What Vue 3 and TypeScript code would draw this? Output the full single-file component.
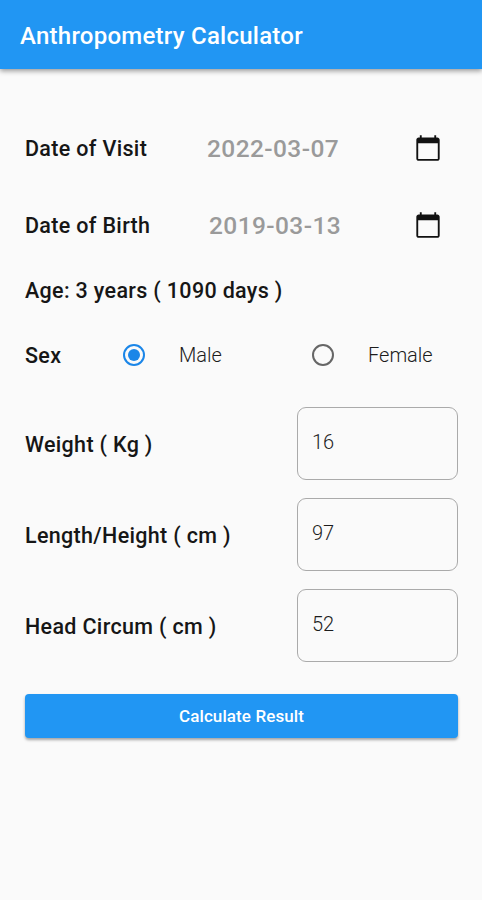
<script setup lang="ts">
import { ref } from 'vue'

const dates = ref([
  { label: 'Date of Visit', value: '2022-03-07', kind: 'visit' },
  { label: 'Date of Birth', value: '2019-03-13', kind: 'birth' },
])
const sex = ref('Male')
const fields = ref([
  { label: 'Weight ( Kg )', value: '16', kind: 'weight' },
  { label: 'Length/Height ( cm )', value: '97', kind: 'height' },
  { label: 'Head Circum ( cm )', value: '52', kind: 'head' },
])
</script>

<template>
  <div class="screen">
    <header class="bar"><h1>Anthropometry Calculator</h1></header>
    <main>
      <div v-for="d in dates" :key="d.kind" class="date-row" :class="d.kind">
        <span class="label">{{ d.label }}</span>
        <span class="date">{{ d.value }}</span>
        <button class="cal" :aria-label="d.label">
          <svg viewBox="0 0 24 24"><path d="M20 3h-1V1h-1.6v2H6.6V1H5v2H4c-1.1 0-2 .9-2 2v16c0 1.1.9 2 2 2h16c1.1 0 2-.9 2-2V5c0-1.1-.9-2-2-2zm.4 18.4H3.6V8h16.8v13.4z" /></svg>
        </button>
      </div>
      <div class="age label">Age: 3 years ( 1090 days )</div>
      <div class="sex-row">
        <span class="label">Sex</span>
        <button v-for="s in ['Male', 'Female']" :key="s" class="option" :class="{ on: sex === s }" @click="sex = s">
          <span class="radio"></span><span class="name">{{ s }}</span>
        </button>
      </div>
      <div class="fields">
        <label v-for="f in fields" :key="f.kind" class="field">
          <span class="label">{{ f.label }}</span>
          <input v-model="f.value" />
        </label>
      </div>
      <button class="submit">Calculate Result</button>
    </main>
  </div>
</template>

<style>
body { margin: 0; background: #fafafa; }
</style>
<style scoped>
.screen { width: 482px; height: 900px; background: #fafafa; font-family: Roboto, sans-serif; color: #161616; overflow: hidden; }
.bar { height: 69px; background: #2196f3; box-shadow: 0 2px 5px rgba(0, 0, 0, .4); display: flex; align-items: center; padding: 2px 20px 0; box-sizing: border-box; }
h1 { margin: 0; font-size: 24px; font-weight: 500; letter-spacing: .25px; color: #fff; white-space: nowrap; }
main { padding: 40px 24px 0 25px; display: flex; flex-direction: column; }
button { border: 0; background: none; padding: 0; font: inherit; color: inherit; }
.label { font-size: 21.5px; font-weight: 500; letter-spacing: .33px; white-space: nowrap; }
.date-row { height: 77px; display: grid; grid-template-columns: 182px 207px 28px; align-items: center; padding-top: 1px; box-sizing: border-box; }
.birth .date { padding-left: 2px; }
.date { font-size: 24.5px; font-weight: 500; letter-spacing: .4px; color: #9a9a9a; }
.cal { height: 28px; }
svg { width: 28px; height: 28px; display: block; fill: #111; }
.age { height: 54px; line-height: 55px; }
.sex-row { height: 76px; display: grid; grid-template-columns: 98px 189px 1fr; align-items: center; }
.option { display: flex; align-items: center; }
.radio { width: 22px; height: 22px; border: 2px solid #666; border-radius: 50%; box-sizing: border-box; display: grid; place-items: center; }
.on .radio { border-color: #1b86e8; }
.on .radio::after { content: ''; width: 12px; height: 12px; border-radius: 50%; background: #1b86e8; }
.name { margin-left: 34px; font-size: 20px; font-weight: 300; color: #1c1c1c; }
.fields { padding-top: 5px; }
.field { height: 91px; display: flex; justify-content: space-between; align-items: center; }
.field .label { padding-top: 1px; }
input { width: 161px; height: 73px; box-sizing: border-box; border: 1px solid #aaa; border-radius: 9px; background: transparent; padding: 0 14px 3px; font: 300 20px Roboto, sans-serif; color: #1c1c1c; outline: none; }
.submit { margin-top: 23px; height: 44px; border-radius: 4px; background: #2196f3; color: #fff; font-size: 17px; font-weight: 500; letter-spacing: .1px; box-shadow: 0 2px 3px rgba(0, 0, 0, .35); }
</style>
